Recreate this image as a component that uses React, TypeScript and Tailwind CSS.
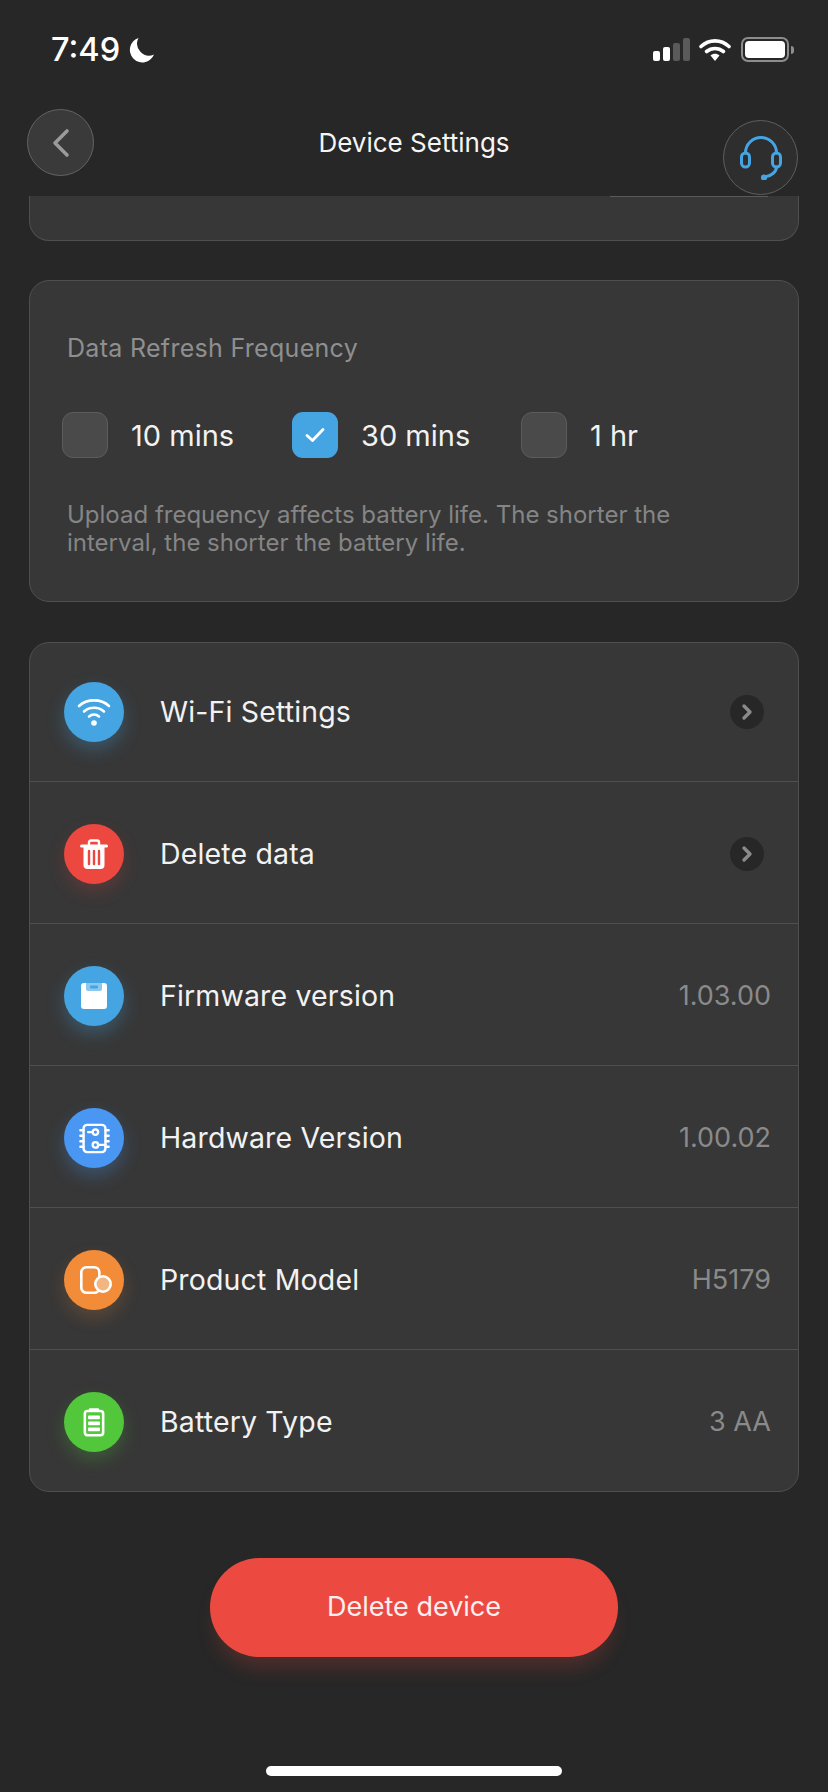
import { ReactNode } from "react";

const CheckOption = ({ label, checked }: { label: string; checked?: boolean }) => (
  <div className="flex items-center">
    <div
      className={
        checked
          ? "w-[46px] h-[46px] rounded-[11px] bg-[#45a5e3] flex items-center justify-center"
          : "w-[46px] h-[46px] rounded-[11px] bg-[#4a4a4a] border border-[#5c5c5c]"
      }
    >
      {checked && (
        <svg width="22" height="18" viewBox="0 0 22 18" fill="none">
          <path d="M3 9.5 L8.5 14.5 L19 3.5" stroke="#fff" strokeWidth="2.8" strokeLinecap="round" strokeLinejoin="round" />
        </svg>
      )}
    </div>
    <span className="ml-[23px] text-[29px] leading-none text-[#f2f2f2]">{label}</span>
  </div>
);

const Row = ({
  icon,
  label,
  value,
  arrow,
  color,
  glow,
}: {
  icon: ReactNode;
  label: string;
  value?: string;
  arrow?: boolean;
  color: string;
  glow: string;
}) => (
  <div className="h-[142px] pt-[3px] first:h-[139px] first:pt-0 last:h-[141px] flex items-center pl-[34px] pr-[27px] border-b border-[#4f4f4f] last:border-b-0">
    <div className={`w-[60px] h-[60px] rounded-full flex items-center justify-center ${color} ${glow}`}>{icon}</div>
    <span className="ml-[36px] text-[28.5px] leading-none text-[#f2f2f2] tracking-[0.15px]">{label}</span>
    <div className="ml-auto">
      {value && <span className="text-[27px] leading-none text-[#8a8a8a]">{value}</span>}
      {arrow && (
        <div className="w-[34px] h-[34px] rounded-full bg-[#272727] flex items-center justify-center mr-[7px]">
          <svg width="14" height="18" viewBox="0 0 14 18" fill="none">
            <path d="M4 3 L10 9 L4 15" stroke="#8a8a8a" strokeWidth="3.4" strokeLinecap="round" strokeLinejoin="round" />
          </svg>
        </div>
      )}
    </div>
  </div>
);

const WifiIcon = (
  <svg width="36" height="30" viewBox="0 0 36 30" fill="none" stroke="#fff" strokeWidth="2.6" strokeLinecap="round">
    <path d="M3 9 C11 1.5 25 1.5 33 9" />
    <path d="M8 14.5 C13.5 9.5 22.5 9.5 28 14.5" />
    <path d="M13 19.5 C16 17 20 17 23 19.5" />
    <circle cx="18" cy="26" r="2.8" fill="#fff" stroke="none" />
  </svg>
);

const TrashIcon = (
  <svg width="28" height="31" viewBox="0 0 28 31" fill="none" strokeLinecap="round" strokeLinejoin="round">
    <path d="M1.5 7 H26.5" stroke="#fff" strokeWidth="3" />
    <path d="M9 6 V3.5 Q9 1.5 11 1.5 H17 Q19 1.5 19 3.5 V6" stroke="#fff" strokeWidth="2.4" />
    <path d="M3.5 7 H24.5 V26 Q24.5 30 20.5 30 H7.5 Q3.5 30 3.5 26 Z" fill="#fff" />
    <path d="M9 12 V25 M14 12 V25 M19 12 V25" stroke="#ec4840" strokeWidth="2.4" />
  </svg>
);

const SaveIcon = (
  <svg width="28" height="28" viewBox="0 0 28 28" fill="none">
    <rect x="1" y="1" width="26" height="26" rx="3" fill="#fff" />
    <path d="M6 1 H22 V7 Q22 9 20 9 H8 Q6 9 6 7 Z" fill="#8cc7ee" />
    <rect x="10" y="3.5" width="8" height="3" rx="1" fill="#45a5e3" />
  </svg>
);

const ChipIcon = (
  <svg width="31" height="31" viewBox="0 0 34 34" fill="none" stroke="#fff" strokeWidth="2.6" strokeLinecap="round">
    <rect x="5" y="2" width="24" height="30" rx="4" />
    <path d="M1.5 8 H5 M1.5 14 H5 M1.5 20 H5 M1.5 26 H5 M29 8 H32.5 M29 14 H32.5 M29 20 H32.5 M29 26 H32.5" />
    <circle cx="18" cy="10" r="3" />
    <path d="M15 10 H10" />
    <circle cx="18" cy="24" r="3" />
    <path d="M21 24 H29" />
  </svg>
);

const ModelIcon = (
  <svg className="ml-[4px]" width="32" height="28" viewBox="0 0 32 28" fill="none" stroke="#fff" strokeWidth="2.6">
    <rect x="1.3" y="1.3" width="18" height="25.4" rx="5" />
    <circle cx="23" cy="18" r="7.7" fill="#f2b680" />
  </svg>
);

const BatteryIcon = (
  <svg width="22" height="30" viewBox="0 0 24 32" fill="none">
    <rect x="2" y="4" width="20" height="26.5" rx="3" stroke="#fff" strokeWidth="2.8" />
    <rect x="6.5" y="1" width="11" height="4" rx="1" fill="#fff" />
    <rect x="5.5" y="9" width="13" height="4" rx="1" fill="#fff" />
    <rect x="5.5" y="15.5" width="13" height="4" rx="1" fill="#fff" />
    <rect x="5.5" y="22" width="13" height="4" rx="1" fill="#fff" />
  </svg>
);

const App = () => {
  return (
    <div className="relative w-[828px] h-[1792px] overflow-hidden bg-[#272727] font-['Inter',sans-serif]">
      {/* status bar */}
      <div className="h-[100px] flex items-start justify-between pl-[51px] pr-[34px] pt-[33px]">
        <div className="flex items-center">
          <span className="text-[32.5px] leading-[34px] font-medium text-white">7:49</span>
          <svg className="ml-[9px]" width="26" height="26" viewBox="0 0 26 26">
            <path d="M9.5 1 A12.5 12.5 0 1 0 25 17.5 A12 12 0 0 1 9.5 1 Z" fill="#fff" />
          </svg>
        </div>
        <div className="flex items-center pt-[4px]">
          <svg width="37" height="24" viewBox="0 0 37 24">
            <rect x="0" y="13" width="7" height="10" rx="2" fill="#fff" />
            <rect x="10" y="9" width="7" height="14" rx="2" fill="#fff" />
            <rect x="20" y="5" width="7" height="18" rx="2" fill="#5a5a5a" />
            <rect x="30" y="0" width="7" height="23" rx="2" fill="#5a5a5a" />
          </svg>
          <svg className="ml-[9px]" width="32" height="24" viewBox="0 0 32 24" fill="none">
            <path d="M2 8.5 C10 1 22 1 30 8.5" stroke="#fff" strokeWidth="3.6" strokeLinecap="round" />
            <path d="M7.5 13.5 C12.5 9.5 19.5 9.5 24.5 13.5" stroke="#fff" strokeWidth="3.6" strokeLinecap="round" />
            <path d="M11.5 17.5 C14 15.3 18 15.3 20.5 17.5 L16 23 Z" fill="#fff" />
          </svg>
          <div className="ml-[10px] w-[48px] h-[25px] rounded-[7px] border-2 border-[#8d8d8d] p-[2px]">
            <div className="w-full h-full rounded-[4px] bg-white" />
          </div>
          <div className="ml-[2px] w-[3px] h-[8px] rounded-r-full bg-[#8d8d8d]" />
        </div>
      </div>

      {/* nav bar */}
      <div className="relative h-[96px] pl-[27px] pt-[9px]">
        <div className="w-[67px] h-[67px] rounded-full bg-[#3a3a3a] border border-[#636363] flex items-center justify-center">
          <svg width="20" height="30" viewBox="0 0 20 30" fill="none">
            <path d="M16 3 L4 15 L16 27" stroke="#9a9a9a" strokeWidth="3.6" strokeLinecap="round" strokeLinejoin="round" />
          </svg>
        </div>
        <div className="absolute left-0 right-0 top-[30px] text-center text-[26px] leading-[26px] text-[#f5f5f5]">
          Device Settings
        </div>
        <div className="absolute left-[723px] top-[20px] z-10 w-[75px] h-[75px] rounded-full bg-[#2e2e2e] border border-[#5f5f5f] flex items-center justify-center">
          <svg width="42" height="44" viewBox="0 0 42 44" fill="none" stroke="#45a5e3" strokeWidth="3" strokeLinecap="round">
            <path d="M5.5 17 A15.5 15.5 0 0 1 36.5 17" />
            <rect x="1.5" y="17" width="8" height="14" rx="4" />
            <rect x="32.5" y="17" width="8" height="14" rx="4" />
            <path d="M36.5 31 C36.5 36 31 40 25 41" />
            <circle cx="24" cy="41.5" r="1.6" fill="#45a5e3" />
          </svg>
        </div>
      </div>

      {/* scrolled card stub */}
      <div className="relative mx-[29px] h-[45px] bg-[#373737] border-x border-b border-[#4f4f4f] rounded-b-[20px]">
        <div className="absolute left-[580px] top-0 w-[158px] h-px bg-[#5a5a5a]" />
      </div>

      {/* refresh frequency */}
      <div className="mx-[29px] mt-[39px] h-[322px] bg-[#373737] border border-[#4f4f4f] rounded-[20px] pl-[37px] pr-[80px] pt-[52px]">
        <div className="text-[25px] leading-[30px] text-[#8f8f8f] tracking-[0.3px]">Data Refresh Frequency</div>
        <div className="flex items-center mt-[49px] -ml-[5px]">
          <div className="w-[230px]"><CheckOption label="10 mins" /></div>
          <div className="w-[229px]"><CheckOption label="30 mins" checked /></div>
          <CheckOption label="1 hr" />
        </div>
        <p className="mt-[43px] text-[24px] leading-[28px] text-[#858585]">
          Upload frequency affects battery life. The shorter the interval, the shorter the battery life.
        </p>
      </div>

      {/* info rows */}
      <div className="mx-[29px] mt-[40px] bg-[#373737] border border-[#4f4f4f] rounded-[20px] overflow-hidden">
        <Row icon={WifiIcon} label="Wi-Fi Settings" arrow color="bg-[#45a5e3]" glow="shadow-[0_8px_18px_rgba(69,165,227,0.3)]" />
        <Row icon={TrashIcon} label="Delete data" arrow color="bg-[#ec4840]" glow="shadow-[0_8px_18px_rgba(236,72,64,0.2)]" />
        <Row icon={SaveIcon} label="Firmware version" value="1.03.00" color="bg-[#45a5e3]" glow="shadow-[0_8px_18px_rgba(69,165,227,0.3)]" />
        <Row icon={ChipIcon} label="Hardware Version" value="1.00.02" color="bg-[#4a97f3]" glow="shadow-[0_8px_18px_rgba(74,151,243,0.3)]" />
        <Row icon={ModelIcon} label="Product Model" value="H5179" color="bg-[#f28c38]" glow="shadow-[0_8px_18px_rgba(242,140,56,0.2)]" />
        <Row icon={BatteryIcon} label="Battery Type" value="3 AA" color="bg-[#52c73c]" glow="shadow-[0_8px_18px_rgba(82,199,60,0.25)]" />
      </div>

      {/* delete button */}
      <div className="mt-[66px] flex justify-center">
        <button className="w-[408px] h-[99px] rounded-full bg-[#ec4a41] text-[27px] text-[#fbeeee] shadow-[0_16px_20px_-6px_rgba(236,74,65,0.22)]">
          Delete device
        </button>
      </div>

      <div className="absolute left-[266px] top-[1766px] w-[296px] h-[10px] rounded-full bg-white" />
    </div>
  );
};

export default App;
